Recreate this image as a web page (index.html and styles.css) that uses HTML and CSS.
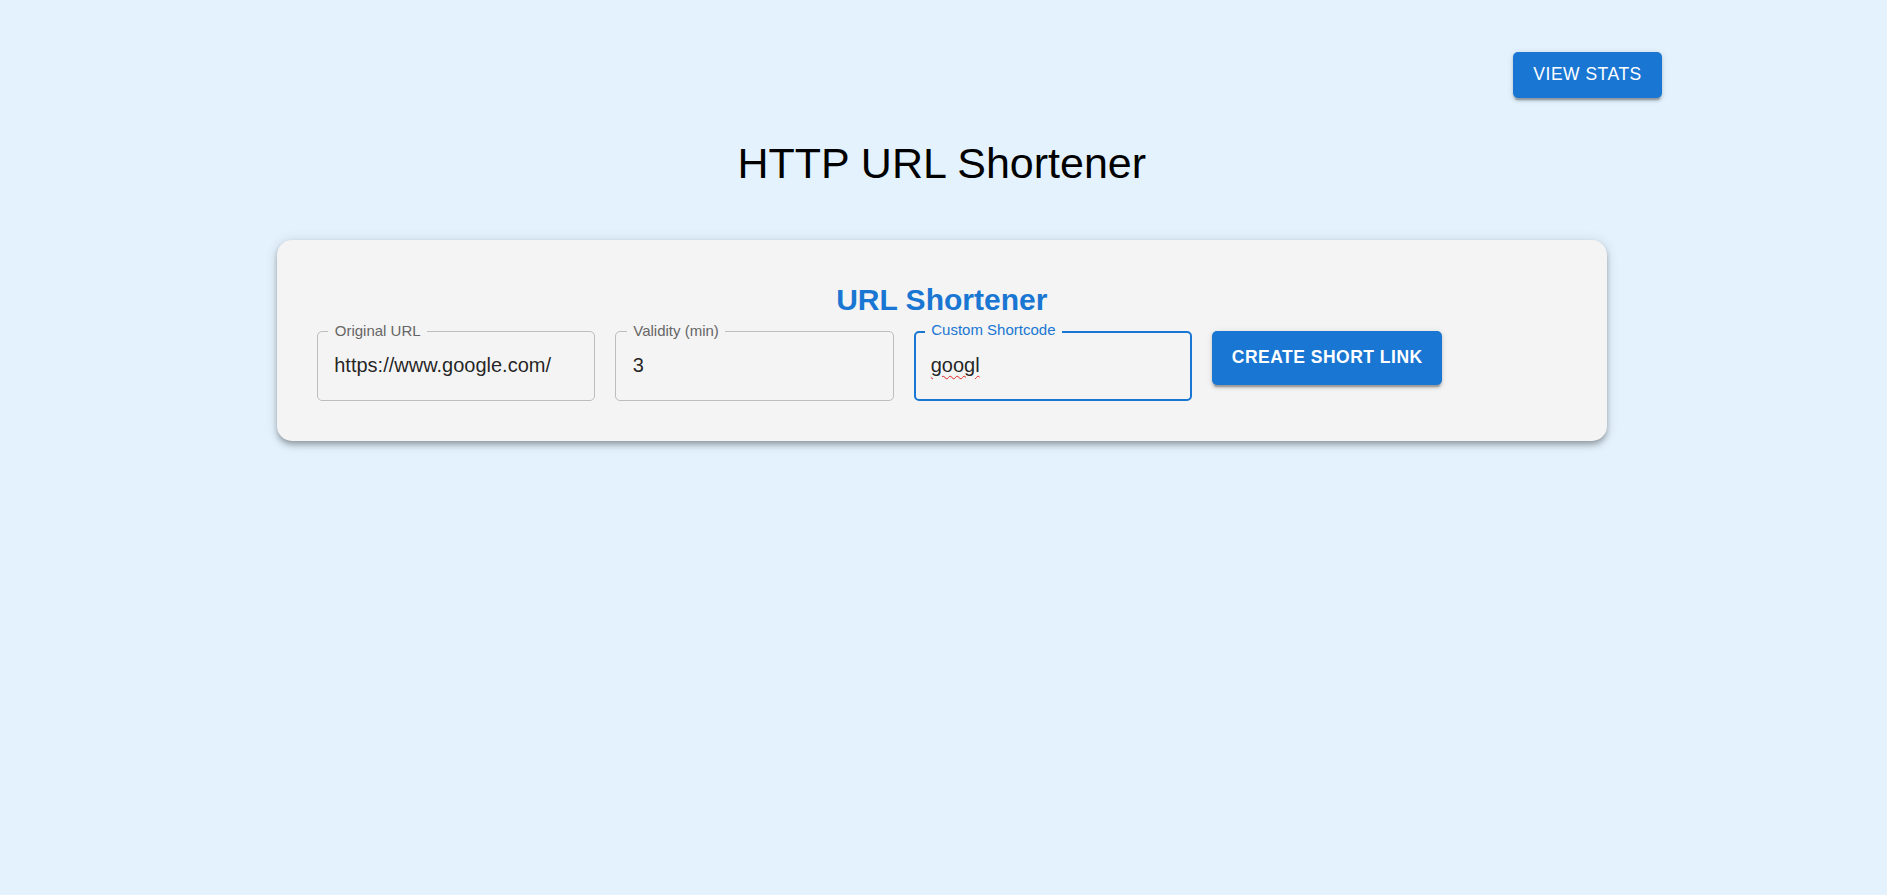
FILE: index.html
```html
<!DOCTYPE html>
<html lang="en">
<head>
<meta charset="utf-8">
<title>HTTP URL Shortener</title>
<link rel="stylesheet" href="styles.css">
</head>
<body>
<div class="container">
  <div class="topbar">
    <button class="btn btn-stats" type="button">View Stats</button>
  </div>
  <h1 class="title">HTTP URL Shortener</h1>
  <div class="card">
    <h2 class="card-title">URL Shortener</h2>
    <div class="form-row">
      <div class="field">
        <span class="field-label">Original URL</span>
        <span class="field-value">https://www.google.com/</span>
      </div>
      <div class="field">
        <span class="field-label">Validity (min)</span>
        <span class="field-value">3</span>
      </div>
      <div class="field field-focused">
        <span class="field-label">Custom Shortcode</span>
        <span class="field-value"><span class="misspelled">googl</span></span>
      </div>
      <button class="btn btn-create" type="button">Create Short Link</button>
    </div>
  </div>
</div>
</body>
</html>
```
FILE: styles.css
```css
html, body {
  margin: 0;
  padding: 0;
}

body {
  background: #e3f2fd;
  font-family: "Liberation Sans", Arial, Helvetica, sans-serif;
  color: rgba(0, 0, 0, 0.87);
  min-height: 895px;
  padding-right: 3.5px;
}

.container {
  max-width: 1500px;
  margin: 0 auto;
  padding: 0 30px;
  box-sizing: border-box;
}

.topbar {
  display: flex;
  justify-content: flex-end;
  padding-top: 52px;
}

.btn {
  font-family: "Liberation Sans", Arial, Helvetica, sans-serif;
  text-transform: uppercase;
  color: #fff;
  background: #1976d2;
  border: none;
  border-radius: 5px;
  cursor: pointer;
  box-shadow: 0 3.75px 1.25px -2.5px rgba(0, 0, 0, 0.2),
              0 2.5px 2.5px 0 rgba(0, 0, 0, 0.14),
              0 1.25px 6.25px 0 rgba(0, 0, 0, 0.12);
}

.btn-stats {
  height: 45.6px;
  padding: 0 20px;
  font-size: 17.5px;
  font-weight: 400;
  letter-spacing: 0.5px;
  line-height: 1.75;
}

.title {
  margin: 39.5px 0 50.5px;
  font-size: 43px;
  font-weight: 400;
  line-height: 52.5px;
  text-align: center;
  color: #000;
}

.card {
  width: 1330px;
  margin: 0 auto;
  box-sizing: border-box;
  padding: 40px;
  background: #f4f4f4;
  border-radius: 15px;
  box-shadow: 0 2.5px 5px -1.25px rgba(0, 0, 0, 0.2),
              0 5px 6.25px 0 rgba(0, 0, 0, 0.14),
              0 1.25px 12.5px 0 rgba(0, 0, 0, 0.12);
}

.card-title {
  margin: 0 0 10.5px;
  font-size: 30px;
  font-weight: 700;
  line-height: 1.334;
  text-align: center;
  color: #1976d2;
}

.form-row {
  display: flex;
  align-items: flex-start;
  gap: 20px;
}

.field {
  position: relative;
  width: 278.5px;
  height: 70px;
  box-sizing: border-box;
  border: 1px solid #bdbdbd;
  border-radius: 5px;
  padding: 0 16.5px;
  display: flex;
  align-items: center;
}

.field-label {
  position: absolute;
  left: 10.5px;
  top: -10px;
  padding: 0 6.5px;
  background: #f4f4f4;
  font-size: 15px;
  line-height: 18px;
  color: #666;
  white-space: nowrap;
}

.field-value {
  font-size: 20px;
  line-height: 28.75px;
  color: rgba(0, 0, 0, 0.87);
  white-space: nowrap;
}

.field-focused {
  border: 2.5px solid #1976d2;
  padding: 0 15px;
}

.field-focused .field-label {
  left: 9px;
  top: -11.5px;
  color: #1976d2;
}

.misspelled {
  text-decoration: underline wavy #e0201c;
  text-decoration-thickness: 1.3px;
  text-underline-offset: 3px;
}

.btn-create {
  height: 54px;
  padding: 0 19.5px;
  font-size: 17.5px;
  font-weight: 700;
  letter-spacing: 0.5px;
  line-height: 1.75;
}
```
